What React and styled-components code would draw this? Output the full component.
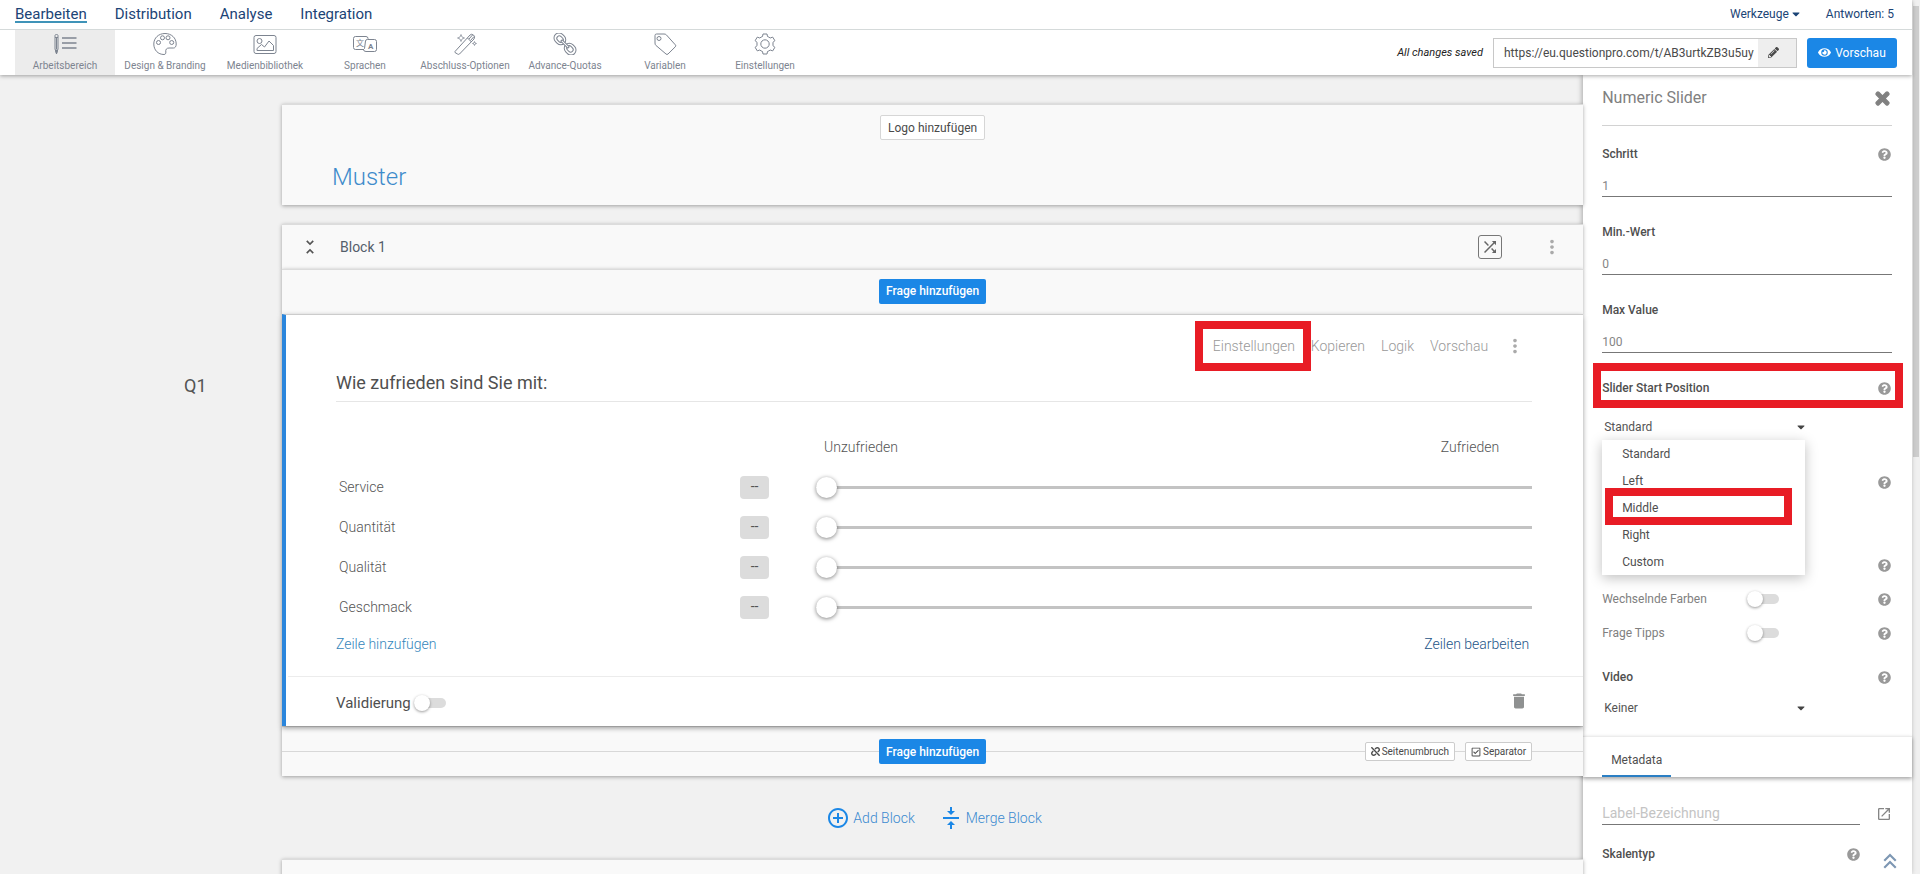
import React, { useState } from "react";
import styled, { createGlobalStyle, css } from "styled-components";
import { FaCaretDown, FaEye, FaPencilAlt, FaQuestionCircle, FaRegCheckSquare, FaTimes, FaUnlink } from "react-icons/fa";
import {
    MdAddCircleOutline,
    MdDelete,
    MdKeyboardDoubleArrowUp,
    MdMoreVert,
    MdOpenInNew,
    MdShuffle,
    MdUnfoldLess,
    MdVerticalAlignCenter,
} from "react-icons/md";

const GlobalStyle = createGlobalStyle`
    *,*::before,*::after{box-sizing:border-box;}
    body{margin:0;background:#f1f1f1;color:#545454;font-family:Roboto,"Noto Sans CJK SC",sans-serif;font-size:12px;line-height:20px;}
    button,input,select{margin:0;padding:0;border:0;background:none;color:inherit;font:inherit;}
    button{cursor:pointer;}
    a{color:inherit;text-decoration:none;}
    h1,h2,h3,ul{margin:0;padding:0;font-weight:400;list-style:none;}
    svg{display:block;flex-shrink:0;}
`;

const Page = styled.div`
    position:relative;display:flex;height:100vh;overflow:hidden;
`;

const Screen = styled.div`
    display:flex;flex-direction:column;flex:1;min-width:0;
`;

const ScrollTrack = styled.div`
    width:8px;padding:6px 1px 0;background:#f0f0f0;
    &::before{content:"";display:block;height:52%;background:#cdcdcd;}
`;

/* header */
const Header = styled.header`
    position:relative;z-index:3;background:#fff;box-shadow:0 1px 4px rgba(0,0,0,.35);
`;

const TopBar = styled.div`
    display:flex;justify-content:space-between;height:30px;padding:4px 18px 0 15px;border-bottom:1px solid #d5dada;color:#1b4476;
`;

const TopNav = styled.nav`
    display:flex;gap:28px;font-size:15px;
    a{height:19px;}
    a.active{border-bottom:2px solid #3f93b8;}
`;

const TopInfo = styled.div`
    display:flex;gap:24px;
    button{display:flex;align-items:center;gap:1px;height:20px;}
`;

const ToolBar = styled.div`
    display:flex;justify-content:space-between;align-items:center;height:45px;padding:0 15px;
`;

const Tools = styled.nav`
    display:flex;
`;

const Tool = styled.a`
    display:flex;flex-direction:column;align-items:center;width:100px;height:45px;padding-top:3px;
    color:#7d8490;font-size:10px;line-height:22px;white-space:nowrap;
    ${({ $active }) => $active && css`background:#ececec;`}
    svg{width:24px;height:22px;}
`;

const Share = styled.div`
    display:flex;align-items:center;color:#4a4a4a;
    em{margin-right:10px;color:#222;font-size:11px;}
`;

const UrlBox = styled.div`
    display:flex;width:304px;height:30px;border:1px solid #c8c8c8;
    input{flex:1;min-width:0;padding-left:10px;}
    button{display:flex;align-items:center;justify-content:center;width:38px;padding-right:8px;background:#eee;}
`;

const PreviewButton = styled.button`
    display:flex;align-items:center;justify-content:center;gap:4px;width:90px;height:30px;margin-left:10px;
    border-radius:3px;background:#1b87e6;color:#fff;
`;

/* workspace */
const Body = styled.div`
    display:flex;flex:1;min-height:0;
`;

const Workspace = styled.main`
    position:relative;z-index:2;flex:1;min-width:0;padding-top:29px;
`;

const Row = styled.div`
    display:grid;grid-template-columns:282px minmax(0,1fr);
    & > :last-child{grid-column:2;}
    ${({ $spaced }) => $spaced && css`margin-bottom:19px;`}
    ${({ $raised }) => $raised && css`position:relative;z-index:1;`}
`;

const Panel = styled.section`
    border-top:1px solid #dcdcdc;background:#f9f9f9;box-shadow:0 1px 4px rgba(0,0,0,.35);
`;

const SurveyHead = styled(Panel)`
    display:flex;flex-direction:column;align-items:center;height:101px;padding-top:10px;
    h1{align-self:stretch;padding:19px 50px 0;color:#3d8bcb;font-size:24px;font-weight:300;line-height:36px;}
`;

const LogoButton = styled.button`
    height:25px;padding:0 7px;border:1px solid #d6d6d6;border-radius:2px;background:#fff;color:#4a4a4a;
`;

const ShuffleButton = styled.button`
    display:flex;align-items:center;justify-content:center;width:24px;height:24px;margin-right:39px;
    border:1px solid #777;border-radius:3px;color:#666;
`;

const DotsButton = styled.button`
    color:#aaa;
`;

const CollapseButton = styled.button`
    color:#555;
`;

const BlockHead = styled(Panel)`
    display:flex;align-items:center;height:45px;padding:0 20px 0 18px;
    h2{flex:1;padding-left:20px;color:#545e6b;font-size:14px;}
`;

const AddRow = styled(Panel)`
    display:grid;grid-template-columns:1fr auto 1fr;align-items:center;height:45px;padding:0 51px 2px 0;
    ${({ $line }) => $line && css`height:50px;padding-bottom:0;background:linear-gradient(#d8d8d8,#d8d8d8) 0 24px/100% 1px no-repeat #f9f9f9;`}
    & > button{grid-column:2;margin-left:51px;}
`;

const AddButton = styled.button`
    height:25px;padding:0 7px;border-radius:2px;background:#1b87e6;color:#fff;font-weight:500;
`;

const Extras = styled.div`
    display:flex;justify-content:flex-end;gap:10px;
    button{display:flex;align-items:center;gap:2px;height:19px;padding:0 5px;border:1px solid #ccc;border-radius:2px;background:#fff;color:#4a4a4a;font-size:10px;}
`;

const QuestionNumber = styled.div`
    padding:62px 0 0 184px;font-size:18px;
`;

const Question = styled.section`
    border-top:1px solid #ccc;border-left:4px solid #2b86dc;background:#fff;box-shadow:0 2px 5px rgba(0,0,0,.4);
`;

const QuestionBody = styled.div`
    height:361px;padding:0 51px 0 50px;
    h3{height:36px;border-bottom:1px solid #e6e6e6;color:#4f4f4f;font-size:18px;line-height:34px;}
`;

const QuestionMenu = styled.div`
    display:flex;justify-content:flex-end;align-items:center;gap:16px;height:51px;padding-top:11px;
    color:#999;font-size:14px;font-weight:300;
    ${DotsButton}{margin-right:6px;}
`;

const Scale = styled.div`
    display:flex;justify-content:space-between;height:40px;margin:25px 0 0 476px;padding:10px 33px 0 12px;font-size:14px;font-weight:300;
`;

const SliderRow = styled.div`
    display:grid;grid-template-columns:404px 76px minmax(0,1fr);align-items:center;height:40px;font-size:14px;font-weight:300;
    label{padding-left:3px;}
    output{width:29px;height:23px;border-radius:4px;background:#dcdcdc;line-height:21px;text-align:center;font-weight:400;}
    input{
        width:100%;height:22px;appearance:none;background:linear-gradient(#c3c3c3,#c3c3c3) center/100% 3px no-repeat;
        &::-webkit-slider-thumb{appearance:none;width:21px;height:21px;border-radius:50%;background:#fff;box-shadow:0 1px 4px rgba(0,0,0,.5);}
    }
`;

const RowLinks = styled.div`
    display:flex;justify-content:space-between;padding:7px 3px 0 0;color:#3486bb;font-size:14px;font-weight:300;
    a:last-child{color:#1d5488;}
`;

const QuestionFoot = styled.div`
    display:flex;align-items:center;height:50px;margin-left:2px;padding:2px 54px 0 48px;border-top:1px solid #ececec;color:#4f4f4f;font-size:15px;
    label{display:flex;align-items:center;gap:3px;flex:1;}
    button{padding-bottom:4px;color:#8f9191;}
`;

const Switch = styled.input.attrs({ type: "checkbox", role: "switch" })`
    appearance:none;display:flex;align-items:center;width:32px;height:10px;border-radius:5px;background:#dcdcdc;cursor:pointer;
    &::before{content:"";width:16px;height:16px;border-radius:50%;background:#fff;box-shadow:0 1px 3px rgba(0,0,0,.4);}
    &:checked::before{margin-left:16px;}
`;

const BlockActions = styled.div`
    display:flex;justify-content:center;gap:24px;padding:31px 0 30px 3px;color:#3a8ad0;font-size:14px;font-weight:300;
    button{display:flex;align-items:center;gap:3px;height:22px;}
    svg{color:#1b87e6;}
`;

/* settings sidebar */
const Sidebar = styled.aside`
    position:relative;z-index:1;width:17.2%;background:#fff;box-shadow:-1px 0 5px rgba(0,0,0,.3);
`;

const SideTitle = styled.div`
    display:flex;align-items:center;justify-content:space-between;height:51px;margin:0 20px 0 19px;padding:0 0 4px;border-bottom:1px solid #d2d2d2;color:#808080;
    h2{font-size:16px;}
    path{stroke:currentColor;stroke-width:36px;}
`;

const SideGroup = styled.div`
    padding:0 20px 0 19px;
`;

const Field = styled.div`
    display:flex;flex-direction:column;height:78px;
    input{height:21px;border-bottom:1px solid #777;color:#858585;}
`;

const FieldHead = styled.div`
    display:flex;align-items:center;justify-content:space-between;height:34px;padding-right:1px;
    ${({ $tall }) => $tall && css`height:50px;padding-top:6px;`}
    ${({ $gap }) => $gap && css`margin-top:${$gap}px;`}
    ${({ $indent }) => $indent && css`padding-right:32px;`}
    label{color:#4f4f4f;font-weight:500;}
    svg{color:#999;}
`;

const SelectBox = styled.div`
    position:relative;display:flex;align-items:center;width:203px;height:28px;
    ${({ $gap }) => $gap && css`margin-top:${$gap}px;`}
    select{width:100%;padding-left:2px;appearance:none;}
    & > svg{position:absolute;right:-2px;pointer-events:none;color:#444;}
`;

const Menu = styled.ul`
    position:absolute;z-index:2;top:27px;left:0;width:100%;background:#fff;box-shadow:0 3px 12px rgba(0,0,0,.25);
    button{display:block;width:100%;height:27px;padding-left:20px;color:#4f4f4f;text-align:left;}
`;

const HelpLine = styled.div`
    display:flex;align-items:center;justify-content:space-between;height:34px;padding-right:1px;color:#808080;
    svg{margin-left:auto;color:#999;}
    label{display:flex;align-items:center;justify-content:space-between;width:177px;}
    ${({ $gap }) => $gap && css`margin-top:${$gap}px;`}
`;

const Tabs = styled.div`
    display:flex;height:41px;margin-top:14px;padding-left:19px;border-top:1px solid #ececec;box-shadow:0 2px 4px rgba(0,0,0,.35);
    button{padding:12px 9px 4px;border-bottom:2px solid #2b7fc4;color:#4f4f4f;}
`;

const LabelField = styled.div`
    display:flex;align-items:center;gap:16px;padding:26px 0 12px;
    input{flex:1;min-width:0;height:22px;padding-bottom:2px;border-bottom:1px solid #777;font-size:14px;}
    input::placeholder{color:#c4c4c4;opacity:1;}
    svg{color:#858585;}
`;

const TopLink = styled.a`
    position:absolute;z-index:4;right:17px;bottom:0;color:#7d97b3;
`;

/* red highlight frames drawn over the page */
const Marked = styled.span`
    position:relative;
    ${({ $inset }) => $inset && css`
        &::after{
            content:"";position:absolute;z-index:5;pointer-events:none;border:8px solid #e81c25;
            inset:${$inset};
        }
    `}
`;

const Stroke = ({ children }) => (
    <svg viewBox="0 0 24 22" fill="none" stroke="currentColor" strokeWidth="1" strokeLinejoin="round" aria-hidden="true">
        {children}
    </svg>
);

const icons = {
    workspace: (
        <Stroke>
            <path d="M2 2.500q0-1 1.500-1t1.500 1V16l-1.500 4.500L2 16zM2 4.500h3M3.500 5v11" />
            <path d="M2.500 17h2l-1 4z" fill="currentColor" />
            <path d="M9 5h14.500M9 10h14.500M9 15h14.500" strokeWidth="1.500" />
        </Stroke>
    ),
    palette: (
        <Stroke>
            <path d="M12 .5C5.500.5.8 5 .8 11S5 21.500 11 21.500c1.500 0 2-1.200 1.800-2.500-.4-2.500.8-4 3.200-4h4.500c1.800 0 2.700-1.600 2.700-4C23.200 5 18.500.5 12 .5z" />
            <circle cx="5.500" cy="9.500" r="2" /><circle cx="9.500" cy="4.800" r="2" />
            <circle cx="15" cy="4.800" r="2" /><circle cx="18.700" cy="9.500" r="2" />
        </Stroke>
    ),
    media: (
        <Stroke>
            <rect x="1" y="2.500" width="22" height="18" rx="2" />
            <circle cx="6.500" cy="8" r="2.500" />
            <path d="M4 17.500v-2l4.500-4 3 2.500 4.500-6 4.500 4.500v5z" />
        </Stroke>
    ),
    languages: (
        <Stroke>
            <path d="M11 16.500H2.500q-2 0-2-2v-9q0-2 2-2H13q2 0 2 2V6M12.500 8q0-1.500 2-1.500h7q2 0 2 2v8q0 2-2 2h-8.500q-2.500 0-2.500-2l1-1z" />
            <text x="3" y="13" fontSize="8" fill="currentColor" stroke="none">文</text>
            <text x="15" y="16" fontSize="8" fontWeight="700" fill="currentColor" stroke="none">A</text>
        </Stroke>
    ),
    wand: (
        <Stroke>
            <path d="M2 18.500 17 2q1.500-1.500 3.500 0t.5 4L6.500 21q-1 .8-2 0L2 19.500q-.5-.5 0-1zM14.500 5l4 4M16 6l3.500-4M17.500 7.500 21 3.500" />
            <path d="M8 1.500 9 4l2.500 1L9 6 8 8.500 7 6 4.500 5 7 4zM21.500 8.500l.5 1.500 1.500.5-1.500.5-.5 1.500-.5-1.500-1.500-.5 1.500-.5z" strokeWidth=".7" />
        </Stroke>
    ),
    chain: (
        <Stroke>
            <g transform="rotate(45 12 11)">
                <rect x="-1.500" y="6" width="12.500" height="10" rx="5" /><rect x="1.500" y="8.500" width="7" height="5" rx="2.500" />
                <rect x="13" y="6" width="12.500" height="10" rx="5" /><rect x="15.500" y="8.500" width="7" height="5" rx="2.500" />
                <path d="M7 10h10v2H7z" fill="#fff" />
            </g>
        </Stroke>
    ),
    tag: (
        <Stroke>
            <path d="M2 2.500q0-1.500 1.500-1.500H11q1.500 0 2.300.8l9 10q1 1 0 2L15 21q-1 1-2 0L2.800 12.300Q2 11.500 2 10z" />
            <circle cx="6" cy="5.500" r="2" />
        </Stroke>
    ),
    gear: (
        <Stroke>
            <path d="M9.500 3.500 10 1h4l.5 2.500q1.500.5 2.700 1.500l2.500-.9 2.200 3.600-2 1.700q.3 1.600 0 3.200l2 1.700-2.200 3.600-2.500-.9q-1.200 1-2.700 1.500L14 21h-4l-.5-2.500Q8 18 6.800 17l-2.500.9-2.200-3.600 2-1.700q-.3-1.600 0-3.200l-2-1.700 2.200-3.600 2.500.9Q8 4 9.500 3.500z" />
            <circle cx="12" cy="11" r="4.200" />
        </Stroke>
    ),
};

const tools = [
    { name: "Arbeitsbereich", icon: "workspace" },
    { name: "Design & Branding", icon: "palette" },
    { name: "Medienbibliothek", icon: "media" },
    { name: "Sprachen", icon: "languages" },
    { name: "Abschluss-Optionen", icon: "wand" },
    { name: "Advance-Quotas", icon: "chain" },
    { name: "Variablen", icon: "tag" },
    { name: "Einstellungen", icon: "gear" },
];

const rows = ["Service", "Quantität", "Qualität", "Geschmack"];
const positions = ["Standard", "Left", "Middle", "Right", "Custom"];

const Help = () => <FaQuestionCircle size={13} aria-label="Hilfe" />;

const PageHeader = () => (
    <Header>
        <TopBar>
            <TopNav>
                <a className="active" href="#bearbeiten">Bearbeiten</a>
                <a href="#distribution">Distribution</a>
                <a href="#analyse">Analyse</a>
                <a href="#integration">Integration</a>
            </TopNav>
            <TopInfo>
                <button type="button">Werkzeuge<FaCaretDown size={12} /></button>
                <a href="#antworten">Antworten: 5</a>
            </TopInfo>
        </TopBar>
        <ToolBar>
            <Tools>
                {tools.map(({ name, icon }, i) => (
                    <Tool key={name} href={`#${icon}`} $active={i === 0}>{icons[icon]}{name}</Tool>
                ))}
            </Tools>
            <Share>
                <em>All changes saved</em>
                <UrlBox>
                    <input type="text" aria-label="URL" defaultValue="https://eu.questionpro.com/t/AB3urtkZB3u5uy" />
                    <button type="button" aria-label="URL bearbeiten"><FaPencilAlt size={11} /></button>
                </UrlBox>
                <PreviewButton type="button"><FaEye size={13} />Vorschau</PreviewButton>
            </Share>
        </ToolBar>
    </Header>
);

const SliderQuestion = () => {
    const [values, setValues] = useState({});
    return (
        <Question>
            <QuestionBody>
                <QuestionMenu>
                    <Marked $inset="-15px -16px -15px -18px"><a href="#einstellungen">Einstellungen</a></Marked>
                    <a href="#kopieren">Kopieren</a>
                    <a href="#logik">Logik</a>
                    <a href="#vorschau">Vorschau</a>
                    <DotsButton type="button" aria-label="Mehr"><MdMoreVert size={22} /></DotsButton>
                </QuestionMenu>
                <h3>Wie zufrieden sind Sie mit:</h3>
                <Scale><span>Unzufrieden</span><span>Zufrieden</span></Scale>
                {rows.map((row) => (
                    <SliderRow key={row}>
                        <label htmlFor={row}>{row}</label>
                        <output htmlFor={row}>{values[row] ?? "--"}</output>
                        <input id={row} type="range" value={values[row] ?? 0} onChange={(e) => setValues({ ...values, [row]: e.target.value })} />
                    </SliderRow>
                ))}
                <RowLinks><a href="#neu">Zeile hinzufügen</a><a href="#zeilen">Zeilen bearbeiten</a></RowLinks>
            </QuestionBody>
            <QuestionFoot>
                <label>Validierung<Switch /></label>
                <button type="button" aria-label="Löschen"><MdDelete size={20} /></button>
            </QuestionFoot>
        </Question>
    );
};

const BlockHeader = ({ name, shuffle }) => (
    <BlockHead>
        <CollapseButton type="button" aria-label="Einklappen"><MdUnfoldLess size={20} /></CollapseButton>
        <h2>{name}</h2>
        {shuffle && <ShuffleButton type="button" aria-label="Zufällig"><MdShuffle size={18} /></ShuffleButton>}
        <DotsButton type="button" aria-label="Mehr"><MdMoreVert size={22} /></DotsButton>
    </BlockHead>
);

const Settings = () => {
    const [position, setPosition] = useState("Standard");
    const [open, setOpen] = useState(true);
    return (
        <Sidebar>
            <SideTitle>
                <h2>Numeric Slider</h2>
                <button type="button" aria-label="Schließen"><FaTimes size={19} /></button>
            </SideTitle>
            <SideGroup>
                <Field>
                    <FieldHead $tall><label htmlFor="step">Schritt</label><Help /></FieldHead>
                    <input id="step" defaultValue="1" />
                </Field>
                <Field>
                    <FieldHead $tall><label htmlFor="min">Min.-Wert</label></FieldHead>
                    <input id="min" defaultValue="0" />
                </Field>
                <Field>
                    <FieldHead $tall><label htmlFor="max">Max Value</label></FieldHead>
                    <input id="max" defaultValue="100" />
                </Field>
                <Marked as="div" $inset="3px -11px 2px -9px">
                    <FieldHead $tall><label htmlFor="start">Slider Start Position</label><Help /></FieldHead>
                </Marked>
                <SelectBox $gap={3}>
                    <select id="start" value={position} onChange={(e) => setPosition(e.target.value)}>
                        {positions.map((p) => <option key={p}>{p}</option>)}
                    </select>
                    <FaCaretDown size={12} />
                    {open && (
                        <Menu>
                            {positions.map((p) => (
                                <Marked as="li" key={p} $inset={p === "Middle" && "-6px 13px -4px 3px"}>
                                    <button type="button" onClick={() => { setPosition(p); setOpen(false); }}>{p}</button>
                                </Marked>
                            ))}
                        </Menu>
                    )}
                </SelectBox>
                <HelpLine $gap={24}><Help /></HelpLine>
                <HelpLine $gap={49}><Help /></HelpLine>
                <HelpLine><label>Wechselnde Farben<Switch /></label><Help /></HelpLine>
                <HelpLine><label>Frage Tipps<Switch /></label><Help /></HelpLine>
                <FieldHead $gap={10}><label htmlFor="video">Video</label><Help /></FieldHead>
                <SelectBox>
                    <select id="video"><option>Keiner</option></select>
                    <FaCaretDown size={12} />
                </SelectBox>
            </SideGroup>
            <Tabs><button type="button">Metadata</button></Tabs>
            <SideGroup>
                <LabelField>
                    <input aria-label="Label-Bezeichnung" placeholder="Label-Bezeichnung" />
                    <MdOpenInNew size={16} />
                </LabelField>
                <FieldHead $indent><label>Skalentyp</label><Help /></FieldHead>
            </SideGroup>
        </Sidebar>
    );
};

const App = () => (
    <Page>
        <GlobalStyle />
        <Screen>
            <PageHeader />
            <Body>
                <Workspace>
                    <Row $spaced>
                        <SurveyHead>
                            <LogoButton type="button">Logo hinzufügen</LogoButton>
                            <h1>Muster</h1>
                        </SurveyHead>
                    </Row>
                    <Row><BlockHeader name="Block 1" shuffle /></Row>
                    <Row><AddRow><AddButton type="button">Frage hinzufügen</AddButton></AddRow></Row>
                    <Row $raised>
                        <QuestionNumber>Q1</QuestionNumber>
                        <SliderQuestion />
                    </Row>
                    <Row>
                        <AddRow $line>
                            <AddButton type="button">Frage hinzufügen</AddButton>
                            <Extras>
                                <button type="button"><FaUnlink size={9} />Seitenumbruch</button>
                                <button type="button"><FaRegCheckSquare size={10} />Separator</button>
                            </Extras>
                        </AddRow>
                    </Row>
                    <Row>
                        <BlockActions>
                            <button type="button"><MdAddCircleOutline size={24} />Add Block</button>
                            <button type="button"><MdVerticalAlignCenter size={24} />Merge Block</button>
                        </BlockActions>
                    </Row>
                    <Row><BlockHeader /></Row>
                </Workspace>
                <Settings />
            </Body>
        </Screen>
        <ScrollTrack />
        <TopLink href="#top" aria-label="Nach oben"><MdKeyboardDoubleArrowUp size={26} /></TopLink>
    </Page>
);

export default App;
